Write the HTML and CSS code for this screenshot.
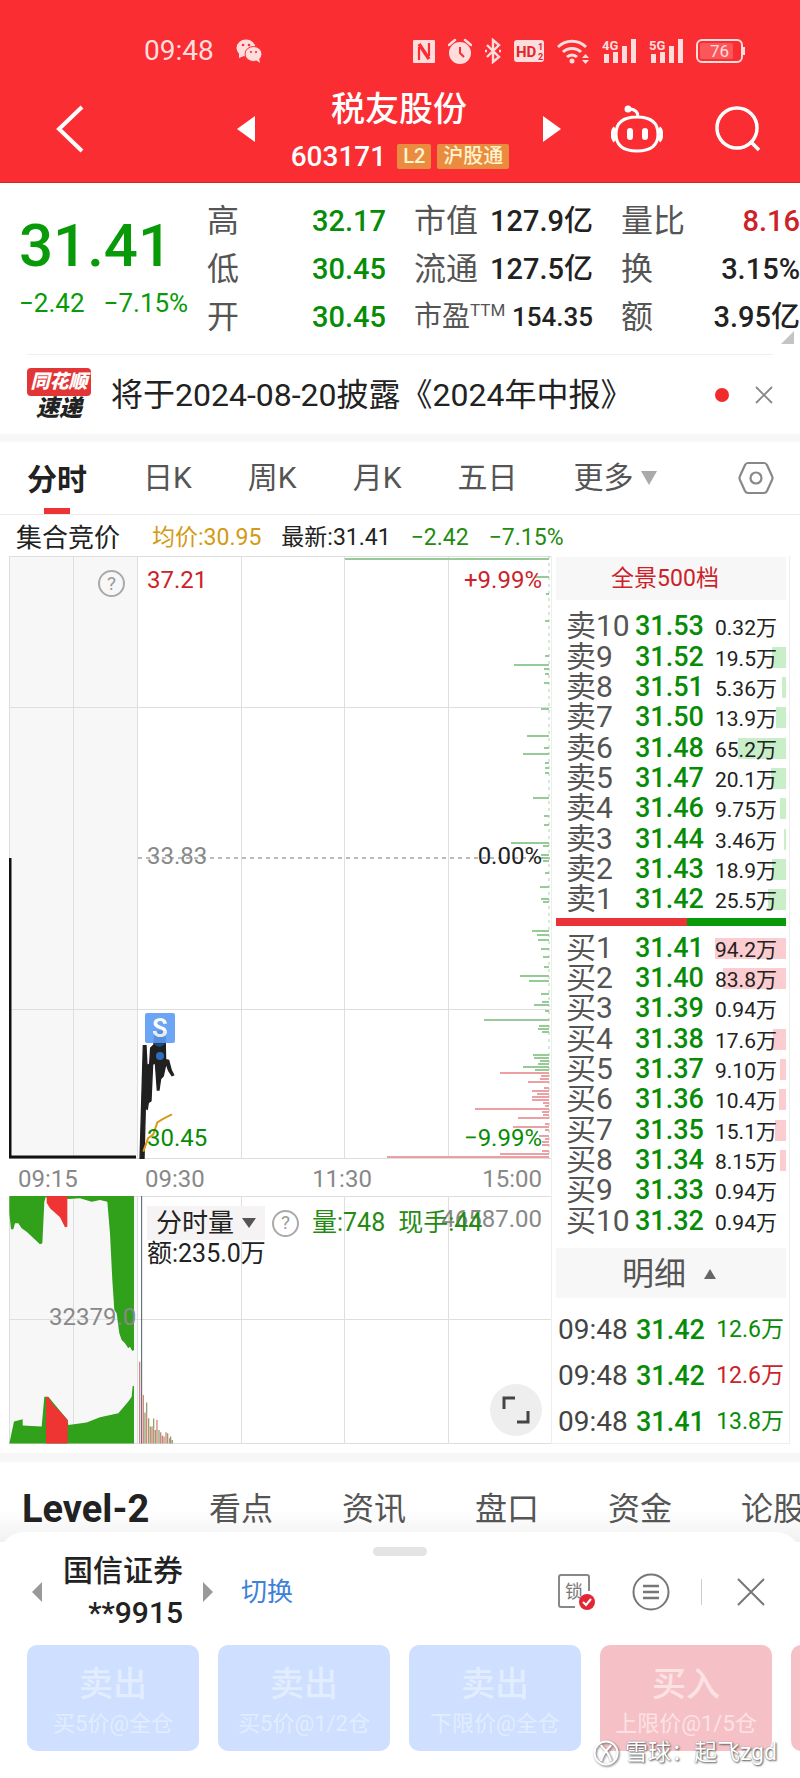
FILE: index.html
```html
<!DOCTYPE html>
<html lang="zh-CN">
<head>
<meta charset="utf-8">
<meta name="viewport" content="width=device-width, initial-scale=1">
<title>税友股份 603171</title>
<link rel="stylesheet" href="styles.css">
</head>
<body>
<header class="top">
  <div class="status">
    <span class="clock">09:48</span>
    <svg class="wechat" width="26" height="24" viewBox="0 0 26 24" fill="#fdd"><ellipse cx="10" cy="9" rx="9.5" ry="8.5"/><path d="M3 14l0 5 5-2z"/><circle cx="7" cy="6" r="1.3" fill="#fa2d33"/><circle cx="13" cy="6" r="1.3" fill="#fa2d33"/><ellipse cx="17.500" cy="15" rx="8.500" ry="7.500" stroke="#fa2d33"/><path d="M20 21l4 3-1-5z"/><circle cx="15" cy="13" r="1.100" fill="#fa2d33"/><circle cx="20" cy="13" r="1.100" fill="#fa2d33"/></svg>
    <div class="status-icons">
      <svg width="22" height="24" viewBox="0 0 22 24"><rect width="22" height="23" y="1" rx="1" fill="#fdd"/><path d="M6 21V8M16 4v13" stroke="#fa2d33" stroke-width="2.200"/><path d="M6 5l10 15" stroke="#fa2d33" stroke-width="3.500"/></svg>
      <svg width="24" height="26" viewBox="0 0 24 26"><circle cx="12" cy="15" r="11" fill="#fdd"/><path d="M1 7l6-5M23 7l-6-5" stroke="#fdd" stroke-width="2.500" stroke-linecap="round"/><path d="M12 9v6l4 4" fill="none" stroke="#fa2d33" stroke-width="2"/></svg>
      <svg width="16" height="26" viewBox="0 0 16 26" fill="none" stroke="#fdd" stroke-width="2.400"><path d="M2 7l12 12-6 5V2l6 5L2 19"/><path d="M0 13h2M14 13h2"/></svg>
      <svg width="30" height="22" viewBox="0 0 30 22"><rect width="30" height="22" rx="3" fill="#fdd"/><text x="2" y="17" font-size="15" font-weight="700" fill="#e0252c">HD</text><text x="24" y="10" font-size="9" font-weight="700" fill="#e0252c">1</text><text x="24" y="20" font-size="9" font-weight="700" fill="#e0252c">2</text></svg>
      <svg width="32" height="26" viewBox="0 0 32 26" fill="none" stroke="#fdd" stroke-width="3"><path d="M1 9a20 20 0 0 1 28 0M6 14a13 13 0 0 1 18 0M10 19a7 7 0 0 1 10 0"/><circle cx="15" cy="23" r="2.500" fill="#fdd" stroke="none"/><path d="M25 20l3.500-4 3.500 4zM25 22l3.500 4 3.500-4z" fill="#fdd" stroke="none"/></svg>
      <svg width="34" height="26" viewBox="0 0 34 26" fill="#fdd"><text x="0" y="12" font-size="13" font-weight="700">4G</text><path d="M2 16h5v9H2zM11 14h5v11h-5zM20 8h5v17h-5zM29 1h5v24h-5z"/></svg>
      <svg width="34" height="26" viewBox="0 0 34 26" fill="#fdd"><text x="0" y="12" font-size="13" font-weight="700">5G</text><path d="M2 16h5v9H2zM11 14h5v11h-5zM20 8h5v17h-5zM29 1h5v24h-5z"/></svg>
      <svg width="50" height="24" viewBox="0 0 50 24"><rect x="1" y="1" width="45" height="22" rx="5" fill="none" stroke="#fdd" stroke-width="2"/><rect x="4" y="4" width="33" height="16" rx="2" fill="#fff" opacity=".2"/><path d="M48 8v8" stroke="#fdd" stroke-width="2"/><text x="14" y="18" font-size="17" fill="#fdd">76</text></svg>
    </div>
  </div>
  <nav class="nav">
    <button class="icon back" aria-label="返回"><svg width="28" height="48" viewBox="0 0 28 48" fill="none" stroke="#fff" stroke-width="4"><path d="M26 2L3 24l23 22"/></svg></button>
    <button class="icon" aria-label="上一只"><svg width="18" height="26" viewBox="0 0 18 26" fill="#fff"><path d="M18 0v26L0 13z"/></svg></button>
    <div class="title">
      <h1>税友股份</h1>
      <div class="code"><span>603171</span><span class="tag">L2</span><span class="tag">沪股通</span></div>
    </div>
    <button class="icon" aria-label="下一只"><svg width="18" height="26" viewBox="0 0 18 26" fill="#fff"><path d="M0 0v26l18-13z"/></svg></button>
    <button class="icon robot" aria-label="智能助手"><svg width="52" height="48" viewBox="0 0 52 48" fill="none" stroke="#fff" stroke-width="3"><path d="M26 12c13 0 21 5 21 17 0 11-6 17-21 17S5 40 5 29c0-12 8-17 21-17zM27 12c0-5-3-8-9-8"/><circle cx="17" cy="4" r="3.500" fill="#fff" stroke="none"/><path d="M4 23c-3 3-3 10 0 13M48 23c3 3 3 10 0 13" stroke-width="4"/><path d="M19 26v6M34 26v6" stroke-width="6" stroke-linecap="round"/></svg></button>
    <button class="icon" aria-label="搜索"><svg width="46" height="46" viewBox="0 0 46 46" fill="none" stroke="#fff" stroke-width="3.500"><circle cx="22" cy="22" r="20"/><path d="M35 35l9 9"/></svg></button>
  </nav>
</header>

<main>
  <section class="quote">
    <div class="last"><strong>31.41</strong><div class="delta"><span>−2.42</span><span>−7.15%</span></div></div>
    <dl class="stats">
      <div><dt>高</dt><dd class="down">32.17</dd></div>
      <div><dt>低</dt><dd class="down">30.45</dd></div>
      <div><dt>开</dt><dd class="down">30.45</dd></div>
    </dl>
    <dl class="stats">
      <div><dt>市值</dt><dd>127.9亿</dd></div>
      <div><dt>流通</dt><dd>127.5亿</dd></div>
      <div><dt class="pe">市盈<sup>TTM</sup></dt><dd class="pe-value">154.35</dd></div>
    </dl>
    <dl class="stats">
      <div><dt>量比</dt><dd class="up">8.16</dd></div>
      <div><dt>换</dt><dd>3.15%</dd></div>
      <div><dt>额</dt><dd>3.95亿</dd></div>
    </dl>
    <svg class="more-corner" width="13" height="13" viewBox="0 0 13 13"><path d="M13 0v13H0z" fill="#c4c4c4"/></svg>
  </section>

  <section class="notice">
    <div class="brand"><span class="brand-top">同花顺</span><span class="brand-bottom">速递</span></div>
    <a class="notice-text" href="#report">将于2024-08-20披露《2024年中报》</a>
    <span class="dot"></span>
    <button class="icon" aria-label="关闭"><svg width="18" height="18" viewBox="0 0 18 18" stroke="#888" stroke-width="1.800"><path d="M1 1l16 16M17 1L1 17"/></svg></button>
  </section>

  <nav class="periods">
    <button class="active">分时</button><button>日K</button><button>周K</button><button>月K</button><button>五日</button>
    <button class="more">更多<svg width="16" height="14" viewBox="0 0 16 14"><path d="M0 0h16L8 14z" fill="#aaa"/></svg></button>
    <button class="icon settings" aria-label="设置"><svg width="36" height="34" viewBox="0 0 36 34" fill="none" stroke="#888" stroke-width="2.200"><path d="M10 2h16q2 0 3 2l5 11q1 2 0 4l-5 11q-1 2-3 2H10q-2 0-3-2L2 19q-1-2 0-4L7 4q1-2 3-2z"/><circle cx="18" cy="17" r="5.500"/></svg></button>
  </nav>

  <div class="summary">
    <span class="auction">集合竞价</span><span class="avg">均价:30.95</span><span>最新:31.41</span><span class="fall">−2.42</span><span class="fall">−7.15%</span>
  </div>

  <div class="market">
    <div class="charts">
      <div class="price-chart">
        <svg class="plot" viewBox="0 0 542 603" preserveAspectRatio="none">
          <path d="M0 0h129v603H0z" fill="#f7f7f7"/>
          <path d="M0 .5h542M0 151.500h542M0 453.500h542M0 602.500h542M.5 0v603M64.500 0v603M128.500 0v603M232.500 0v603M335.500 0v603M439.500 0v603" stroke="#dedede" fill="none"/>
          <path d="M129 302h413" stroke="#777" stroke-dasharray="4 4"/>
          <path d="M540 0v603" stroke="#a9d6a9" stroke-dasharray="3 4"/>
          <path d="M540 3h-204M540 21h-14M540 38h-3M540 65h-4M540 100h-4M540 109h-35M540 113h-5M540 118h-4M540 127h-5M540 153h-8M540 180h-22M540 192h-5M540 198h-26M540 207h-4M540 212h-4M540 217h-4M540 242h-16M540 260h-5M540 269h-5M540 287h-38M540 290h-6M540 299h-8M540 302h-10M540 305h-6M540 317h-4M540 331h-9M540 343h-8M540 346h-6M540 375h-17M540 379h-12M540 384h-11M540 393h-8M540 401h-6M540 411h-5M540 420h-29M540 425h-20M540 438h-8M540 446h-7M540 449h-15M540 455h-4M540 464h-65M540 470h-10M540 473h-11M540 476h-7M540 499h-16M540 502h-15M540 505h-9M540 508h-11M540 511h-26M540 514h-14" stroke="#96ca96" stroke-width="2"/>
          <path d="M540 517h-49M540 520h-8M540 523h-9M540 526h-21M540 532h-5M540 535h-17M540 538h-12M540 541h-17M540 544h-17M540 547h-6M540 550h-4M540 553h-74M540 556h-7M540 559h-6M540 562h-31M540 568h-4M540 571h-36M540 574h-4M540 580h-10M540 583h-4M540 586h-7M540 589h-7M540 595h-7M540 598h-49M540 601h-162" stroke="#eda0a4" stroke-width="2"/>
          <path d="M1 302v299h126" fill="none" stroke="#111" stroke-width="3"/>
          <g transform="translate(-9 424) scale(.3333)">
            <path d="M430 197h8l3 60 8-5 3-48 10-10 3-40h30l2 85 9 2 8 30 7 14-5 2-10-15-8-22-8 38-8 8-5 34h-5l-6-82-8 5-5 110-8 5-3 20-6-3-4 156h-12z" fill="#202020" stroke="#202020" stroke-width="4"/>
            <path d="M430 515l14-40 16-12 12-36 20-12 24-12" fill="none" stroke="#d99a1c" stroke-width="6"/>
            <path d="M459 190h38q-18 20-38 0z" fill="#1c4f8a"/><circle cx="480" cy="228" r="12" fill="#2b6fbd"/>
          </g>
        </svg>
        <button class="help auction-help" aria-label="竞价说明">?</button>
        <span class="label high-price up">37.21</span><span class="label high-rate up">+9.99%</span>
        <span class="label mid-price">33.83</span><span class="label mid-rate">0.00%</span>
        <span class="label low-price down">30.45</span><span class="label low-rate down">−9.99%</span>
        <span class="trade-mark">S</span>
      </div>
      <div class="times"><span>09:15</span><span>09:30</span><span>11:30</span><span>15:00</span></div>
      <div class="volume-chart">
        <svg class="plot" viewBox="0 0 542 248" preserveAspectRatio="none">
          <path d="M0 0h129v248H0z" fill="#f7f7f7"/>
          <path d="M0 .5h542M0 123.500h542M0 247.500h542M.5 0v248M64.500 0v248M128.500 0v248M232.500 0v248M335.500 0v248M439.500 0v248" stroke="#dedede" fill="none"/>
          <g transform="translate(-9 -216) scale(.3333)">
            <path d="M28 648H402V1110L397 1113 390 1100 385 1105 375 1090 365 1080 358 1060 350 1000 343 990 337 900 330 760 322 665 300 660 275 665 240 655 205 657 137 652 133 665 127 790 120 793 80 755 65 745 55 730 45 730 40 748 33 748 28 700ZM28 1391L42 1325 68 1318V1337L125 1340 133 1250 145 1250 203 1320 205 1335 260 1328 300 1312 355 1300 385 1265 395 1250 398 1218H402V1391Z" fill="#31a01a"/>
            <path d="M140 648H202V740L195 742 180 712 150 685 140 668ZM138 1391V1250L145 1252 160 1275 185 1300 203 1320V1391Z" fill="#ee3533"/>
            <path d="M425 648V1391" stroke="#4a5a66" stroke-width="3"/>
            <path d="M419 1391V1145M430 1391V1245M440 1391V1300M451 1391V1340M461 1391V1345M471 1391V1320M482 1391V1357M492 1391V1370M498 1391V1357M509 1391V1375" stroke="#d98283" stroke-width="4"/>
            <path d="M435 1391V1298M440 1300V1268M446 1391V1315M456 1391V1340M461 1345V1316M466 1391V1350M477 1391V1350M487 1391V1367M503 1391V1360M512 1391V1370M517 1391V1380" stroke="#8fa468" stroke-width="4"/>
          </g>
        </svg>
        <span class="label volume-max">46587.00</span><span class="label volume-mid">32379.0</span>
        <div class="volume-tools">
          <button class="select-volume">分时量<svg width="14" height="10" viewBox="0 0 14 10"><path d="M0 0h14L7 10z" fill="#555"/></svg></button>
          <button class="help" aria-label="成交量说明">?</button>
          <span class="volume-value">量:748</span><span class="volume-value">现手:44</span>
        </div>
        <div class="turnover">额:235.0万</div>
        <button class="expand" aria-label="全屏"><svg width="28" height="28" viewBox="0 0 28 28" fill="none" stroke="#444" stroke-width="3"><path d="M2 13V2h11M26 15v11H15"/></svg></button>
      </div>
    </div>

    <aside class="book">
      <button class="book-head">全景500档</button>
      <table class="levels asks">
        <tr><th>卖10</th><td>31.53</td><td>0.32万<i style="width:0%"></i></td></tr>
        <tr><th>卖9</th><td>31.52</td><td>19.5万<i style="width:20%"></i></td></tr>
        <tr><th>卖8</th><td>31.51</td><td>5.36万<i style="width:5%"></i></td></tr>
        <tr><th>卖7</th><td>31.50</td><td>13.9万<i style="width:14%"></i></td></tr>
        <tr><th>卖6</th><td>31.48</td><td>65.2万<i style="width:68%"></i></td></tr>
        <tr><th>卖5</th><td>31.47</td><td>20.1万<i style="width:21%"></i></td></tr>
        <tr><th>卖4</th><td>31.46</td><td>9.75万<i style="width:9%"></i></td></tr>
        <tr><th>卖3</th><td>31.44</td><td>3.46万<i style="width:3%"></i></td></tr>
        <tr><th>卖2</th><td>31.43</td><td>18.9万<i style="width:20%"></i></td></tr>
        <tr><th>卖1</th><td>31.42</td><td>25.5万<i style="width:26%"></i></td></tr>
      </table>
      <div class="ratio"><span style="width:57%"></span></div>
      <table class="levels bids">
        <tr><th>买1</th><td>31.41</td><td>94.2万<i style="width:100%"></i></td></tr>
        <tr><th>买2</th><td>31.40</td><td>83.8万<i style="width:89%"></i></td></tr>
        <tr><th>买3</th><td>31.39</td><td>0.94万<i style="width:0%"></i></td></tr>
        <tr><th>买4</th><td>31.38</td><td>17.6万<i style="width:18%"></i></td></tr>
        <tr><th>买5</th><td>31.37</td><td>9.10万<i style="width:9%"></i></td></tr>
        <tr><th>买6</th><td>31.36</td><td>10.4万<i style="width:10%"></i></td></tr>
        <tr><th>买7</th><td>31.35</td><td>15.1万<i style="width:15%"></i></td></tr>
        <tr><th>买8</th><td>31.34</td><td>8.15万<i style="width:8%"></i></td></tr>
        <tr><th>买9</th><td>31.33</td><td>0.94万<i style="width:0%"></i></td></tr>
        <tr><th>买10</th><td>31.32</td><td>0.94万<i style="width:0%"></i></td></tr>
      </table>
      <button class="ticks-head">明细<svg width="12" height="10" viewBox="0 0 12 10"><path d="M6 0l6 10H0z" fill="#666"/></svg></button>
      <table class="ticks">
        <tr><td>09:48</td><td class="down">31.42</td><td class="down">12.6万</td></tr>
        <tr><td>09:48</td><td class="down">31.42</td><td class="up">12.6万</td></tr>
        <tr><td>09:48</td><td class="down">31.41</td><td class="down">13.8万</td></tr>
      </table>
    </aside>
  </div>

  <nav class="sections">
    <a class="current" href="#level2">Level-2</a><a href="#view">看点</a><a href="#news">资讯</a><a href="#book">盘口</a><a href="#funds">资金</a><a href="#forum">论股</a>
  </nav>
</main>

<section class="sheet">
  <div class="handle"></div>
  <div class="account">
    <button class="icon" aria-label="上一账户"><svg width="10" height="20" viewBox="0 0 10 20"><path d="M10 0v20L0 10z" fill="#999"/></svg></button>
    <div class="broker"><span>国信证券</span><span>**9915</span></div>
    <button class="icon" aria-label="下一账户"><svg width="10" height="20" viewBox="0 0 10 20"><path d="M0 0v20l10-10z" fill="#999"/></svg></button>
    <button class="switch">切换</button>
    <button class="icon lock" aria-label="锁定"><svg width="38" height="38" viewBox="0 0 38 38" fill="none"><path d="M18 34H4q-2 0-2-2V4q0-2 2-2h26q2 0 2 2v14" stroke="#888" stroke-width="2"/><text x="8" y="25" font-size="18" fill="#777">锁</text><circle cx="30" cy="29" r="8" fill="#e32636"/><path d="M26 29l3 3 5-6" stroke="#fff" stroke-width="2"/></svg></button>
    <button class="icon menu" aria-label="菜单"><svg width="38" height="38" viewBox="0 0 38 38" fill="none" stroke="#777" stroke-width="2"><circle cx="19" cy="19" r="17.500"/><path d="M11 13h16M11 19h16M11 25h16" stroke-width="2.500"/></svg></button>
    <span class="rule"></span>
    <button class="icon" aria-label="收起"><svg width="28" height="28" viewBox="0 0 28 28" stroke="#777" stroke-width="2"><path d="M1 1l26 26M27 1L1 27"/></svg></button>
  </div>
  <div class="orders">
    <button class="sell"><b>卖出</b><span>买5价@全仓</span></button>
    <button class="sell"><b>卖出</b><span>买5价@1/2仓</span></button>
    <button class="sell"><b>卖出</b><span>下限价@全仓</span></button>
    <button class="buy"><b>买入</b><span>上限价@1/5仓</span></button>
    <button class="buy" aria-label="买入"></button>
  </div>
  <div class="watermark"><svg width="26" height="26" viewBox="0 0 26 26" fill="none" stroke="#fff" stroke-width="2"><circle cx="13" cy="13" r="11.500"/><path d="M8 5c2 4 7 5 10 16M18 5c-2 4-7 5-10 16"/></svg><span>雪球：起飞zgd</span></div>
</section>
</body>
</html>
```
FILE: styles.css
```css
* { box-sizing: border-box; }
body { margin: 0; background: #fff; color: #222; font-family: Roboto, "Noto Sans CJK SC", sans-serif; overflow-x: hidden; }
button { margin: 0; padding: 0; border: 0; background: none; color: inherit; font: inherit; }
a { color: inherit; text-decoration: none; }
svg { display: block; flex: none; }
h1, dl, dd { margin: 0; }
.up { color: #cc2229; }
.down { color: #078c07; }
.icon { display: block; flex: none; }

.top { background: #fa2d33; color: #fff; height: 183px; border-bottom: 1px solid #d3242b; }
.status { display: flex; align-items: center; height: 84px; padding: 18px 54px 0 144px; color: #fdd; }
.clock { font-size: 28px; line-height: 32px; }
.wechat { margin-left: 22px; }
.status-icons { display: flex; align-items: center; gap: 13px; margin-left: auto; }
.nav { display: flex; align-items: center; padding: 0 39px 0 56px; height: 90px; }
.back { margin-right: auto; }
.title { width: 288px; padding-top: 7px; text-align: center; }
h1 { font-size: 34px; font-weight: 500; line-height: 48px; }
.code { display: flex; justify-content: center; align-items: center; gap: 6px; margin-left: 34px; width: 222px; font-size: 28px; font-weight: 500; line-height: 48px; }
.tag { padding: 0 6px; border-radius: 2px; background: #ea8c3f; color: #fff3cf; font-size: 20px; line-height: 25px; }
.code .tag:nth-child(2) { margin-left: 5px; }
.robot { margin: 0 52px 0 50px; }

.quote { position: relative; display: grid; grid-template-columns: 160px repeat(3, minmax(0, 1fr)); column-gap: 28px; height: 171px; padding: 14px 0 0 19px; }
.last { color: #089a08; white-space: nowrap; }
.last strong { display: block; padding-top: 12px; font-size: 60px; line-height: 74px; font-weight: 500; }
.delta { display: flex; gap: 19px; font-size: 26px; line-height: 40px; }
.stats div { display: flex; justify-content: space-between; align-items: center; height: 48px; white-space: nowrap; }
.stats dt { color: #555; font-size: 32px; line-height: 48px; }
.stats dd { font-size: 29px; line-height: 48px; font-weight: 500; }
.stats .pe { font-size: 28px; }
.pe sup { font-size: 17px; line-height: 20px; }
.stats .pe-value { font-size: 26px; }
.more-corner { position: absolute; right: 6px; bottom: 10px; }

.notice { display: flex; align-items: center; height: 80px; margin: 0 27px; border-top: 1px solid #eee; }
.brand { width: 64px; margin-right: 20px; font-style: italic; font-weight: 900; text-align: center; }
.brand span { display: block; }
.brand-top { background: #e23636; border-radius: 4px; color: #fff; font-size: 19px; line-height: 28px; }
.brand-bottom { font-size: 23px; line-height: 26px; color: #222; }
.notice-text { font-size: 32px; line-height: 40px; }
.dot { width: 14px; height: 14px; margin: 0 26px 0 auto; border-radius: 50%; background: #f02b2b; }

.periods { display: flex; align-items: center; gap: 56px; height: 81px; padding: 0 26px 0 27px; border-top: 8px solid #f7f7f7; border-bottom: 1px solid #eaeaea; color: #555; font-size: 30px; line-height: 68px; }
.periods button { white-space: nowrap; }
.periods .active { height: 72px; padding-top: 3px; color: #222; font-weight: 700; background: linear-gradient(#e33, #e33) center bottom / 26px 6px no-repeat; }
.more { display: flex; align-items: center; gap: 8px; }
.periods .settings { margin-left: auto; }

.summary { display: flex; align-items: center; gap: 20px; height: 41px; padding: 4px 0 0 16px; font-size: 23px; line-height: 36px; white-space: nowrap; }
.auction { margin-right: 12px; font-size: 26px; }
.avg { color: #d39a14; }
.fall { color: #258a12; }

.market { display: grid; grid-template-columns: minmax(0, 542fr) minmax(0, 239fr); padding: 0 10px 0 9px; }
.charts { display: flex; flex-direction: column; }
.plot { width: 100%; height: 100%; }
.price-chart { position: relative; height: 603px; }
.label { position: absolute; font-size: 24px; line-height: 28px; }
.high-price, .mid-price, .low-price { left: 138px; }
.high-rate, .mid-rate, .low-rate, .volume-max { right: 9px; }
.high-price, .high-rate { top: 10px; }
.mid-price, .mid-rate { top: 286px; }
.low-price, .low-rate { bottom: 7px; }
.mid-price, .volume-max, .volume-mid { color: #888; }
.help { width: 27px; height: 27px; border: 2px solid #aaa; border-radius: 50%; color: #999; font-size: 19px; line-height: 22px; text-align: center; }
.auction-help { position: absolute; left: 89px; top: 14px; }
.trade-mark { position: absolute; left: 136px; top: 457px; width: 30px; height: 30px; border-radius: 2px; background: #5b9cf3; opacity: .9; color: #fff; font-size: 25px; font-weight: 700; line-height: 31px; text-align: center; }
.times { display: grid; grid-template-columns: 129fr 128fr 152fr 123fr; height: 37px; padding: 0 9px; color: #888; font-size: 24px; line-height: 40px; }
.times span:nth-child(3) { padding-left: 41px; }
.times span:last-child { text-align: right; }
.volume-chart { position: relative; height: 248px; }
.volume-max { top: 9px; }
.volume-mid { left: 40px; top: 107px; }
.volume-tools { position: absolute; left: 138px; top: 10px; display: flex; align-items: center; white-space: nowrap; }
.select-volume { display: flex; align-items: center; gap: 8px; height: 34px; margin-right: 7px; padding: 0 9px; background: #f5f3f4; font-size: 26px; line-height: 34px; }
.volume-value { margin-left: 13px; color: #258a12; font-size: 25px; line-height: 34px; }
.turnover { position: absolute; left: 138px; top: 43px; font-size: 25px; line-height: 30px; }
.expand { position: absolute; right: 9px; bottom: 8px; display: grid; place-items: center; width: 52px; height: 52px; border-radius: 50%; background: #eee; }

.book { display: flex; flex-direction: column; height: 888px; padding: 1px 3px 0 4px; border: solid #eee; border-width: 0 1px 1px; }
.book-head { height: 43px; margin-bottom: 11px; padding-right: 12px; background: #f7f7f7; color: #cc2229; font-size: 23px; line-height: 43px; }
.levels, .ticks { display: flex; flex-direction: column; }
.levels { flex: 1; }
tbody { display: flex; flex: 1; flex-direction: column; }
.levels tr { display: grid; flex: 1; grid-template-columns: 69px minmax(0, 1fr) 71px; align-items: center; padding-left: 10px; line-height: 30px; }
.levels th, .levels td { padding: 0; white-space: nowrap; text-align: left; }
.levels th { color: #555; font-size: 30px; font-weight: 400; }
.levels td { color: #078c07; font-size: 27px; font-weight: 500; }
.levels td:last-child { position: relative; padding: 4px 10px 0 0; color: #222; font-size: 21px; font-weight: 400; line-height: 26px; text-align: right; }
.levels i { position: absolute; z-index: -1; right: 0; top: 5px; height: 21px; }
.asks i { background: #c9efc9; }
.bids i { background: #fccdd0; }
.ratio { height: 8px; margin: 3px 0 7px; background: #089a08; }
.ratio span { display: block; height: 8px; background: #e93338; }
.ticks-head { display: flex; align-items: center; justify-content: center; gap: 18px; height: 50px; margin: 12px 0 9px; padding: 2px 4px 0 0; background: #f7f7f7; color: #555; font-size: 32px; line-height: 48px; }
.ticks { margin-bottom: -2px; }
.ticks tr { display: grid; grid-template-columns: 78px minmax(0, 1fr) 72px; padding: 0 2px; line-height: 46px; }
.ticks td { padding: 0; font-size: 28px; color: #444; white-space: nowrap; }
.ticks td.down { color: #078c07; }
.ticks td.up { color: #cc2229; }
.ticks td:nth-child(2) { font-size: 27px; font-weight: 500; }
.ticks td:last-child { font-size: 23px; text-align: right; }

.sections { display: flex; height: 89px; margin-top: 9px; padding-left: 22px; border-top: 9px solid #f7f7f7; background: linear-gradient(#fff 60%, #f1f1f1); color: #555; font-size: 32px; line-height: 94px; overflow: hidden; white-space: nowrap; }
.sections a { flex: none; width: 133px; }
.sections .current { width: 187px; color: #222; font-size: 38px; font-weight: 700; }

.sheet { position: relative; margin-top: -10px; padding-top: 15px; border-radius: 24px 24px 0 0; background: #fff; }
.handle { width: 54px; height: 9px; margin: 0 auto; border-radius: 5px; background: #e4e4e4; }
.account { display: flex; align-items: center; height: 72px; margin-bottom: 17px; padding: 0 35px 0 32px; }
.broker { display: flex; flex-direction: column; width: 122px; margin: 0 20px 0 19px; font-size: 30px; font-weight: 500; line-height: 42px; white-space: nowrap; text-align: right; }
.switch { margin: 0 auto 0 28px; color: #3d82d8; font-size: 26px; line-height: 40px; }
.lock { margin-right: 37px; }
.rule { width: 1px; height: 26px; margin: 0 35px 0 31px; background: #ccc; }
.orders { display: flex; gap: 19px; padding: 0 0 27px 27px; overflow: hidden; }
.orders button { display: flex; flex: none; flex-direction: column; align-items: center; width: 172px; height: 106px; padding-top: 15px; border-radius: 10px; }
.orders b { font-size: 34px; font-weight: 500; line-height: 48px; }
.orders span { font-size: 22px; line-height: 32px; }
.sell { background: #cfdfff; color: #e2edff; }
.buy { background: #f5c1c7; color: #fde2e4; }
.watermark { position: absolute; right: 23px; bottom: 10px; display: flex; align-items: center; gap: 6px; color: #fff; font-size: 23px; line-height: 30px; text-shadow: 1px 1px 2px #555, 0 0 1px #777; }
.watermark svg { filter: drop-shadow(1px 1px 1px #666); }
```
